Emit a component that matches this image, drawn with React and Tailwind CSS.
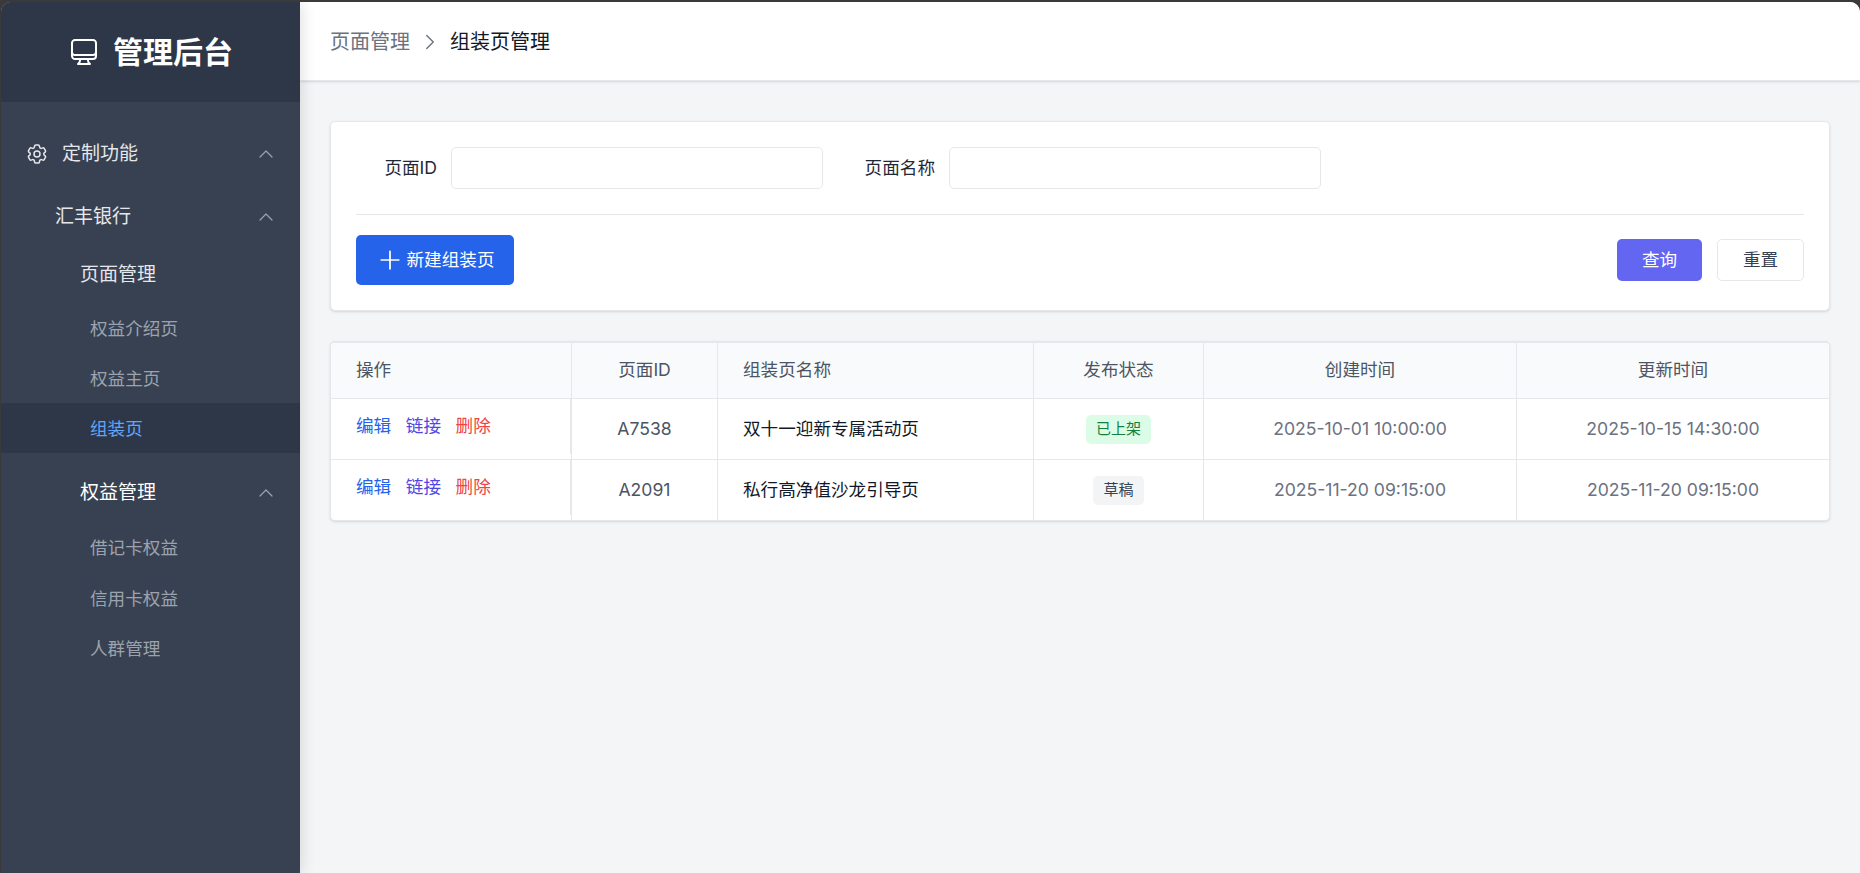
import { ChevronRight, ChevronUp } from "lucide-react";
import { HiOutlineComputerDesktop, HiOutlineCog6Tooth, HiOutlinePlus } from "react-icons/hi2";

const rows = [
  { id: "A7538", name: "双十一迎新专属活动页", status: "已上架", live: true, created: "2025-10-01 10:00:00", updated: "2025-10-15 14:30:00" },
  { id: "A2091", name: "私行高净值沙龙引导页", status: "草稿", live: false, created: "2025-11-20 09:15:00", updated: "2025-11-20 09:15:00" },
];

const columns = "grid grid-cols-[241px_146px_316px_170px_313px_1fr]";

function Sidebar() {
  return (
    <aside className="relative z-10 w-[299px] shrink-0 bg-[#374151] flex flex-col shadow-[2px_0_14px_rgba(0,0,0,0.12)]">
      <div className="h-[100px] bg-[#2d3748] flex items-center justify-center gap-[13px] text-white">
        <HiOutlineComputerDesktop className="w-[32px] h-[32px]" />
        <span className="text-[30px] leading-[40px] font-bold">管理后台</span>
      </div>
      <div className="flex flex-col pt-[25px]">
        <div className="h-[52px] pt-[2px] flex items-center pl-[24px] pr-[22px] text-[#e5e7eb] text-[19px]">
          <HiOutlineCog6Tooth className="w-[24px] h-[24px] mr-[13px]" />
          <span className="flex-1">定制功能</span>
          <ChevronUp className="w-[24px] h-[24px] text-[#9ca3af]" strokeWidth={1.2} />
        </div>
        <div className="h-[52px] pt-[2px] mt-[11px] flex items-center pl-[54px] pr-[22px] text-[#e5e7eb] text-[19px]">
          <span className="flex-1">汇丰银行</span>
          <ChevronUp className="w-[24px] h-[24px] text-[#9ca3af]" strokeWidth={1.2} />
        </div>
        <div className="h-[46px] pt-[2px] mt-[9px] flex items-center pl-[79px] text-[#e5e7eb] text-[19px]">页面管理</div>
        <div className="h-[50px] pt-[2px] mt-[6px] flex items-center pl-[89px] text-[#9ca3af] text-[17.6px]">权益介绍页</div>
        <div className="h-[50px] pt-[2px] flex items-center pl-[89px] text-[#9ca3af] text-[17.6px]">权益主页</div>
        <div className="h-[50px] pt-[2px] flex items-center pl-[89px] text-[#60a5fa] text-[17.6px] bg-[#2d3748]">组装页</div>
        <div className="h-[46px] pt-[2px] mt-[16px] flex items-center pl-[79px] pr-[22px] text-white text-[19px]">
          <span className="flex-1">权益管理</span>
          <ChevronUp className="w-[24px] h-[24px] text-[#9ca3af]" strokeWidth={1.2} />
        </div>
        <div className="h-[50px] pt-[2px] mt-[7px] flex items-center pl-[89px] text-[#9ca3af] text-[17.6px]">借记卡权益</div>
        <div className="h-[50px] mt-[2px] flex items-center pl-[89px] text-[#9ca3af] text-[17.6px]">信用卡权益</div>
        <div className="h-[50px] flex items-center pl-[89px] text-[#9ca3af] text-[17.6px]">人群管理</div>
      </div>
    </aside>
  );
}

function Field({ label, labelWidth }) {
  return (
    <div className="flex items-center">
      <label className={`${labelWidth} pt-px text-right text-[17.6px] text-[#1f2937] mr-[14px]`}>{label}</label>
      <input className="w-[372px] h-[42px] bg-white border border-[#e5e7eb] rounded-[5px] outline-none" />
    </div>
  );
}

function FilterCard() {
  return (
    <div className="h-[190px] bg-white rounded-[5px] border border-[#e5e7eb] shadow-sm px-[25px] pt-[25px]">
      <div className="flex gap-[40px]">
        <Field label="页面ID" labelWidth="w-[81px]" />
        <Field label="页面名称" labelWidth="w-[72px]" />
      </div>
      <div className="h-px bg-[#e5e7eb] mt-[25px]" />
      <div className="flex items-center justify-between mt-[20px]">
        <button className="w-[158px] h-[50px] bg-[#2563eb] text-white text-[17.6px] rounded-[5px] flex items-center justify-center gap-[3px]">
          <HiOutlinePlus className="w-[28px] h-[28px]" />
          新建组装页
        </button>
        <div className="flex gap-[15px]">
          <button className="w-[85px] h-[42px] bg-[#6366f1] text-white text-[17.6px] rounded-[5px]">查询</button>
          <button className="w-[87px] h-[42px] bg-white border border-[#e5e7eb] text-[#374151] text-[17.6px] rounded-[5px]">重置</button>
        </div>
      </div>
    </div>
  );
}

function ListTable() {
  return (
    <div className="mt-[30px] bg-white rounded-[5px] border border-[#e5e7eb] border-t-2 shadow-sm overflow-hidden text-[17.6px]">
      <div className={`${columns} h-[56px] bg-[#f9fafb] text-[#4b5563] border-b border-[#e5e7eb]`}>
        <div className="flex items-center pl-[25px] border-r border-[#e5e7eb]">操作</div>
        <div className="flex items-center justify-center border-r border-[#e5e7eb]">页面ID</div>
        <div className="flex items-center pl-[25px] border-r border-[#e5e7eb]">组装页名称</div>
        <div className="flex items-center justify-center border-r border-[#e5e7eb]">发布状态</div>
        <div className="flex items-center justify-center border-r border-[#e5e7eb]">创建时间</div>
        <div className="flex items-center justify-center">更新时间</div>
      </div>
      {rows.map((row, i) => (
        <div key={row.id} className={`${columns} ${i === 0 ? "h-[61px] border-b border-[#e5e7eb]" : "h-[60px]"}`}>
          <div className="flex border-r border-[#e5e7eb]">
            <div className="flex-1 flex items-start pt-[14px] pl-[25px] gap-[14.6px]">
              <a className="text-[#2563eb]">编辑</a>
              <a className="text-[#4f46e5]">链接</a>
              <a className="text-[#ef4444]">删除</a>
            </div>
            <div className="w-px h-[55px] bg-[#e5e7eb]" />
          </div>
          <div className="flex items-center justify-center text-[#4b5563] border-r border-[#e5e7eb]">{row.id}</div>
          <div className="flex items-center pl-[25px] text-[#111827] border-r border-[#e5e7eb]">{row.name}</div>
          <div className="flex items-center justify-center border-r border-[#e5e7eb]">
            <span className={`mt-px px-[10px] h-[29px] flex items-center rounded-[5px] text-[15px] ${row.live ? "bg-[#dcfce7] text-[#15803d]" : "bg-[#f3f4f6] text-[#374151]"}`}>
              {row.status}
            </span>
          </div>
          <div className="flex items-center justify-center text-[#6b7280] border-r border-[#e5e7eb]">{row.created}</div>
          <div className="flex items-center justify-center text-[#6b7280]">{row.updated}</div>
        </div>
      ))}
    </div>
  );
}

export default function App() {
  return (
    <div className="h-[873px] overflow-hidden bg-[#3a3a3a] pt-[2px] pl-px font-['Inter','Noto_Sans_CJK_SC',sans-serif]">
      <div className="h-full flex rounded-t-[10px] overflow-hidden bg-[#f4f5f7]">
        <Sidebar />
        <main className="flex-1 min-w-0 flex flex-col">
          <header className="h-[79px] pt-px bg-white shadow-sm border-b border-[#e5e7eb] flex items-center pl-[30px] text-[20px]">
            <span className="text-[#6b7280]">页面管理</span>
            <ChevronRight className="w-[26px] h-[26px] mx-[7px] text-[#6b7280]" strokeWidth={1.3} />
            <span className="text-[#111827]">组装页管理</span>
          </header>
          <div className="pt-[40px] pl-[30px] pr-[30px]">
            <FilterCard />
            <ListTable />
          </div>
        </main>
      </div>
    </div>
  );
}
